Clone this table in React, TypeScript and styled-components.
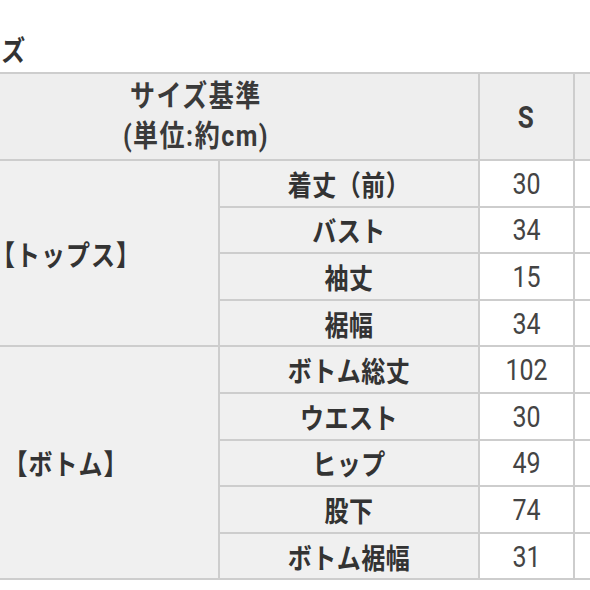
import React from 'react';
import styled, { createGlobalStyle } from 'styled-components';

const GlobalStyle = createGlobalStyle`
  html, body {
    margin: 0;
    padding: 0;
    background: #ffffff;
    overflow: hidden;
  }
  body {
    font-family: Roboto, "Noto Sans CJK JP", sans-serif;
    color: #333333;
  }
`;

const Page = styled.div`
  width: 590px;
  height: 590px;
  overflow: hidden;
`;

const Sheet = styled.div`
  margin-left: -88px;
  width: 780px;
`;

// the source capture is stretched vertically, so glyphs are drawn a little taller
const Txt = styled.span`
  display: inline-block;
  transform: scaleY(1.18);
  transform-origin: center;
`;

const Heading = styled.h2`
  margin: 0;
  padding: 34px 0 0 42px;
  height: 38px;
  font-size: 24px;
  line-height: 30px;
  font-weight: 700;
  font-family: "Noto Sans CJK JP", sans-serif;
  color: #333333;
`;

const Table = styled.table`
  border-collapse: collapse;
  table-layout: fixed;
  width: 760px;
  font-family: Roboto, "Noto Sans CJK JP", sans-serif;
`;

const Cell = styled.td`
  border: 2px solid #cdcdcd;
  padding: 0;
  text-align: center;
  vertical-align: middle;
`;

const HeadCell = styled(Cell).attrs({ as: 'th' })<{ $size?: number }>`
  background: #eeeeee;
  font-size: ${(p) => p.$size ?? 25}px;
  font-weight: 700;
  line-height: 40px;
  letter-spacing: 1.5px;
  color: #3a3a3a;
`;

const GroupCell = styled(Cell)`
  background: #f0f0f0;
  font-size: 24px;
  font-weight: 700;
  letter-spacing: 1px;
  color: #333333;
  font-family: "Noto Sans CJK JP", sans-serif;
`;

const LabelCell = styled(Cell)`
  background: #f0f0f0;
  font-size: 24px;
  font-weight: 700;
  letter-spacing: 0.5px;
  color: #333333;
  font-family: "Noto Sans CJK JP", sans-serif;
`;

const ValueCell = styled(Cell)`
  background: #ffffff;
  font-size: 25px;
  font-weight: 400;
  color: #444444;
`;

const HeadRow = styled.tr`
  height: 87px;
`;

const Row = styled.tr`
  height: 46.6px;
`;

type Item = { label: string; s: string };
type Group = { name: string; items: Item[] };

const groups: Group[] = [
  {
    name: '【トップス】',
    items: [
      { label: '着丈（前）', s: '30' },
      { label: 'バスト', s: '34' },
      { label: '袖丈', s: '15' },
      { label: '裾幅', s: '34' },
    ],
  },
  {
    name: '【ボトム】',
    items: [
      { label: 'ボトム総丈', s: '102' },
      { label: 'ウエスト', s: '30' },
      { label: 'ヒップ', s: '49' },
      { label: '股下', s: '74' },
      { label: 'ボトム裾幅', s: '31' },
    ],
  },
];

export default function App() {
  return (
    <Page>
      <GlobalStyle />
      <Sheet>
        <Heading>
          <Txt>サイズ</Txt>
        </Heading>
        <Table>
          <colgroup>
            <col style={{ width: 306 }} />
            <col style={{ width: 260 }} />
            <col style={{ width: 95 }} />
            <col style={{ width: 99 }} />
          </colgroup>
          <thead>
            <HeadRow>
              <HeadCell colSpan={2}>
                <Txt>サイズ基準</Txt>
                <br />
                <Txt>(単位:約cm)</Txt>
              </HeadCell>
              <HeadCell $size={26}>
                <Txt>S</Txt>
              </HeadCell>
              <HeadCell />
            </HeadRow>
          </thead>
          <tbody>
            {groups.map((group) =>
              group.items.map((item, i) => (
                <Row key={group.name + item.label}>
                  {i === 0 && (
                    <GroupCell rowSpan={group.items.length}>
                      <Txt>{group.name}</Txt>
                    </GroupCell>
                  )}
                  <LabelCell>
                    <Txt>{item.label}</Txt>
                  </LabelCell>
                  <ValueCell>
                    <Txt>{item.s}</Txt>
                  </ValueCell>
                  <ValueCell />
                </Row>
              )),
            )}
          </tbody>
        </Table>
      </Sheet>
    </Page>
  );
}
